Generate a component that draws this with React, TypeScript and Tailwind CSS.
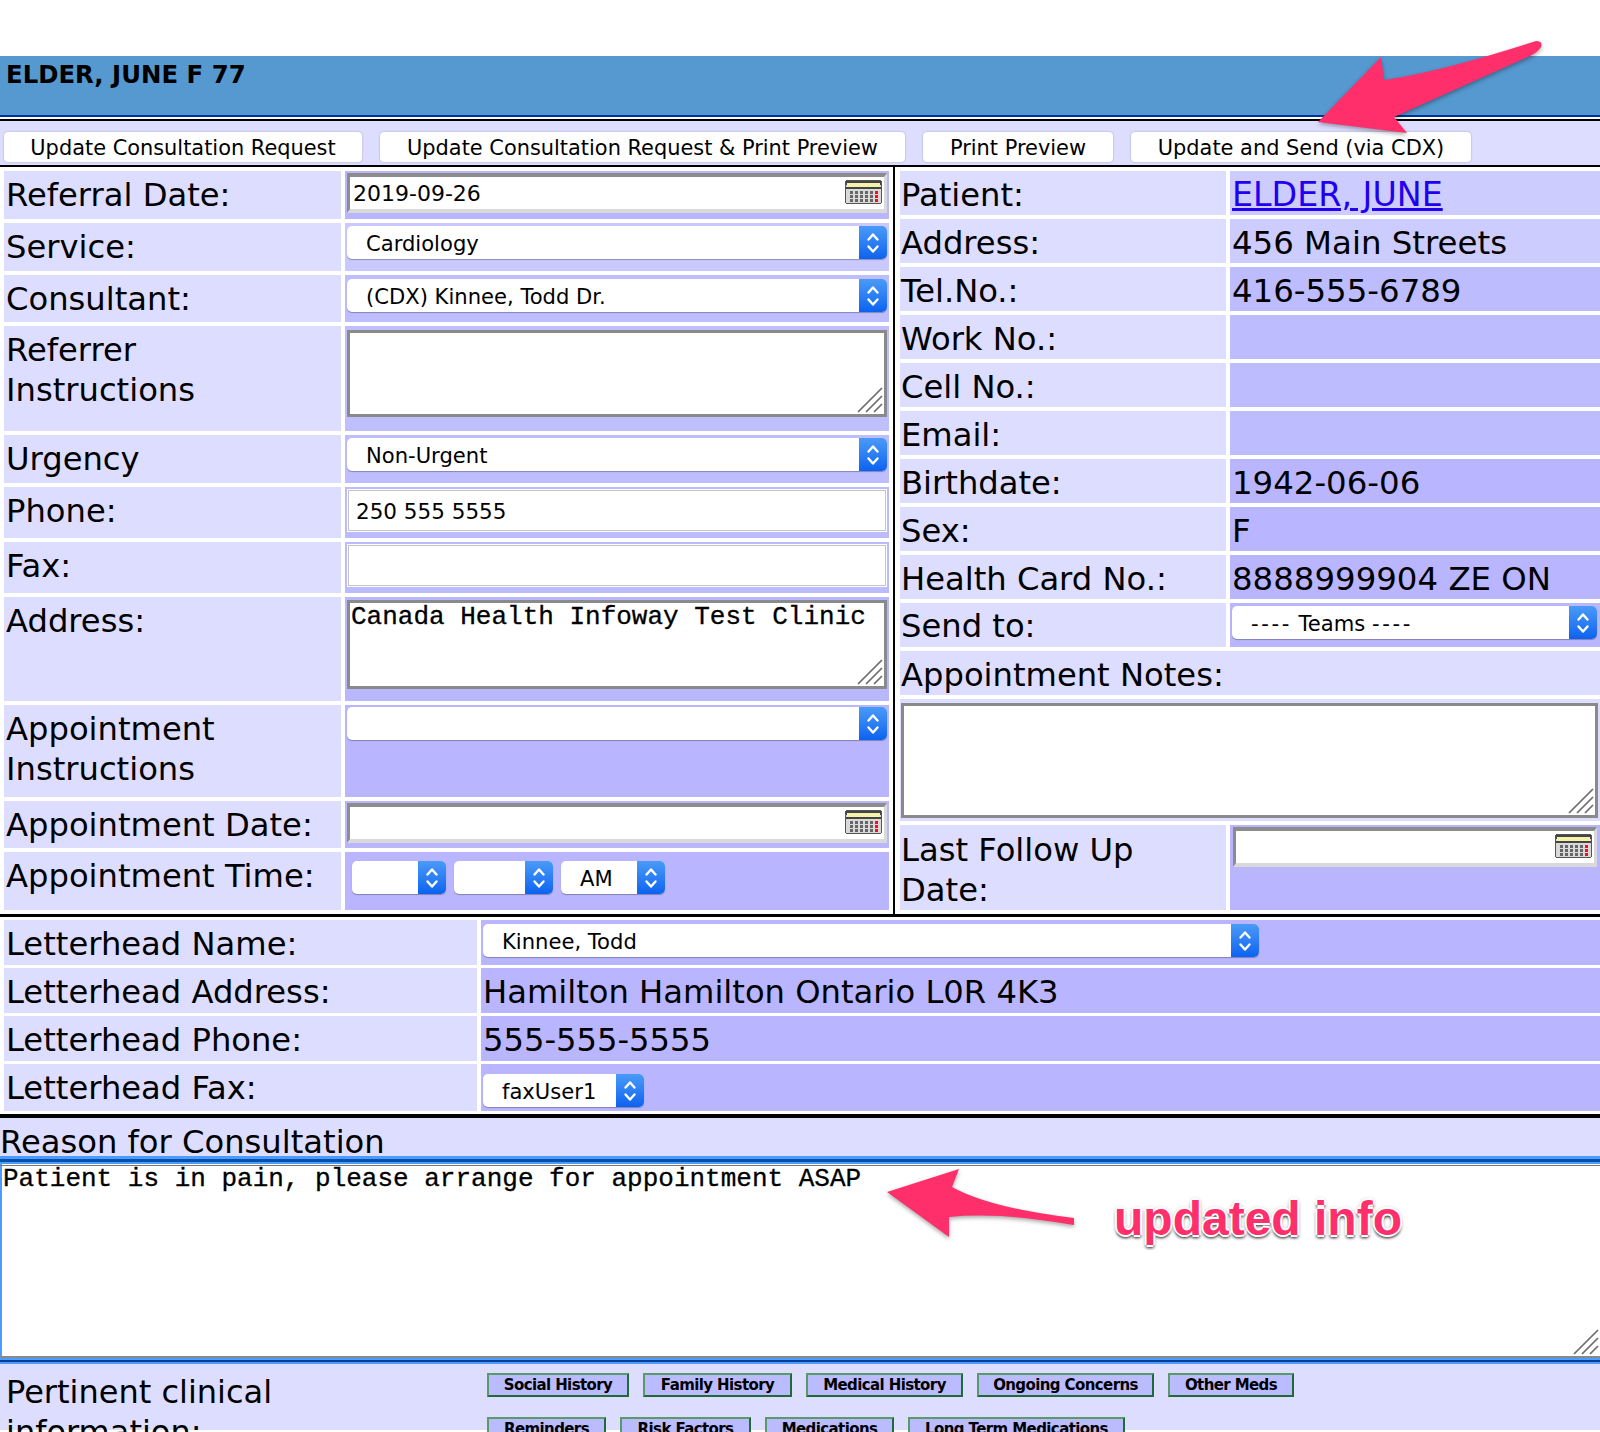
import React from "react";

const SANS = "font-['DejaVu_Sans',Verdana,sans-serif]";
const MONO = "font-['Liberation_Mono',monospace] text-[26px] leading-[26px] [-webkit-text-stroke:0.3px_black]";

function Chevrons({ className = "" }: { className?: string }) {
  return (
    <svg viewBox="0 0 16 26" className={className} fill="none" stroke="white" strokeWidth="2.4" strokeLinecap="round" strokeLinejoin="round">
      <path d="M3.5 9.5 8 4.5l4.5 5" />
      <path d="M3.5 16.5 8 21.5l4.5-5" />
    </svg>
  );
}

function Select({ text = "", w = "w-[540px]", blue = "w-[28px]", pad = "pl-[19px]" }: { text?: React.ReactNode; w?: string; blue?: string; pad?: string }) {
  return (
    <div className={`${w} h-[33px] flex rounded-[5px] bg-white shadow-[0_1px_1px_rgba(0,0,0,0.3)] overflow-hidden`}>
      <div className={`flex-1 min-w-0 ${pad} pt-[2px] flex items-center text-[21.1px] leading-none text-black whitespace-nowrap`}>{text}</div>
      <div className={`${blue} shrink-0 flex items-center justify-center bg-gradient-to-b from-[#4a9af7] to-[#0a62f0]`}>
        <Chevrons className="w-[16px] h-[26px]" />
      </div>
    </div>
  );
}

function Calendar() {
  return (
    <svg viewBox="0 0 37 24" className="w-[37px] h-[24px] -translate-y-[1px]" shapeRendering="crispEdges">
      <rect x="0.5" y="0.5" width="36" height="23" rx="2" fill="#d9d9d9" stroke="#555" />
      <rect x="1" y="1" width="35" height="4" fill="#444" />
      <rect x="2" y="3" width="33" height="4" fill="#f6f3a8" />
      <rect x="1" y="7" width="35" height="2" fill="#444" />
      {[11, 15, 19].map((y) =>
        [5, 10, 15, 20, 25, 30].map((x) => (
          <rect key={`${x}-${y}`} x={x} y={y} width="3" height="3" fill={x === 30 ? "#ee1122" : "#666"} />
        ))
      )}
    </svg>
  );
}

function DateInput({ text = "", w = "w-[540px]" }: { text?: string; w?: string }) {
  return (
    <div className={`${w} h-[40px] flex items-center justify-between pl-[3px] pr-[2px] bg-white border-y-[4px] border-x-[3px] border-t-[#8c8c8c] border-l-[#8c8c8c] border-r-[#d9d9d9] border-b-[#d9d9d9] text-[22px] text-black`}>
      <span>{text}</span>
      <Calendar />
    </div>
  );
}

function Resizer() {
  return (
    <svg viewBox="0 0 26 26" className="absolute right-[1px] bottom-[1px] w-[26px] h-[26px]" fill="none" stroke="#6a6a6a" strokeWidth="1.7">
      <path d="M1 25 25 1M9 25 25 9M17 25 25 17" />
    </svg>
  );
}

function TextBox({ text = "", h = "h-[87px]" }: { text?: string; h?: string }) {
  return (
    <div className={`relative w-[540px] ${h} bg-white border-[3px] border-[#8a8a8a] pl-[1px] pt-[1px] text-black ${MONO}`}>
      {text}
      <Resizer />
    </div>
  );
}

function PlainInput({ text = "" }: { text?: string }) {
  return (
    <div className="w-[538px] ml-[1px] h-[41px] bg-white border border-[#c4c4c4] shadow-[0_0_0_1px_#fff] pl-[7px] pt-[4px] flex items-center text-[21.5px] text-black">
      {text}
    </div>
  );
}

function Row({ h, label, children, bg = "bg-[#b9b6ff]", labelPt = "pt-[4px]" }: { h: string; label: React.ReactNode; children?: React.ReactNode; bg?: string; labelPt?: string }) {
  return (
    <div className={`flex gap-[4px] ${h}`}>
      <div className={`w-[337px] shrink-0 bg-[#ddddff] pl-[2px] ${labelPt} text-[32.2px] leading-[40px] text-black whitespace-nowrap`}>{label}</div>
      <div className={`flex-1 ${bg} pl-[2px]`}>{children}</div>
    </div>
  );
}

function RRow({ label, children, bg = "bg-[#b9b6ff]" }: { label: string; children?: React.ReactNode; bg?: string }) {
  return (
    <div className="flex gap-[4px] h-[44px]">
      <div className="w-[326px] shrink-0 bg-[#ddddff] pl-[1px] text-[32.2px] leading-[48px] text-black whitespace-nowrap">{label}</div>
      <div className={`flex-1 ${bg} pl-[2px] text-[32.4px] leading-[48px] text-black whitespace-nowrap`}>{children}</div>
    </div>
  );
}

function LRow({ label, children, h = "h-[45px]" }: { label: string; children?: React.ReactNode; h?: string }) {
  return (
    <div className={`flex gap-[4px] ${h}`}>
      <div className="w-[473px] shrink-0 bg-[#ddddff] pl-[2px] text-[32.2px] leading-[48px] text-black whitespace-nowrap">{label}</div>
      <div className="flex-1 bg-[#b9b6ff] pl-[2px] text-[32.2px] leading-[48px] text-black whitespace-nowrap">{children}</div>
    </div>
  );
}

function HistoryBtn({ text, w }: { text: string; w: string }) {
  return (
    <div className={`${w} h-[24px] shrink-0 bg-[#bbbbff] border-2 border-t-[#5a9a68] border-l-[#5a9a68] border-r-[#206a38] border-b-[#206a38] flex items-center justify-center text-[15px] font-bold text-black whitespace-nowrap tracking-[-0.6px]`}>
      {text}
    </div>
  );
}

function TopBtn({ text, w }: { text: string; w: string }) {
  return (
    <div className={`${w} h-[30px] shrink-0 bg-white rounded-[4px] shadow-[0_0_2px_rgba(0,0,0,0.3)] pt-[3px] flex items-center justify-center text-[20.9px] text-black whitespace-nowrap`}>
      {text}
    </div>
  );
}

export default function App() {
  return (
    <div className={`relative w-[1600px] h-[1432px] overflow-hidden bg-white ${SANS}`}>
      <div className="h-[56px]" />
      <div className="h-[59px] bg-[#5599d0] pl-[6px] pt-[4px] text-[24.4px] leading-[30px] font-bold text-black">ELDER, JUNE F 77</div>
      <div className="h-[2px] bg-[#003399]" />
      <div className="h-[2px]" />
      <div className="h-[2px] bg-black" />
      <div className="h-[44px] bg-[#ddddff] flex gap-[18px] pl-[4px] pt-[11px]">
        <TopBtn text="Update Consultation Request" w="w-[358px]" />
        <TopBtn text="Update Consultation Request & Print Preview" w="w-[525px]" />
        <TopBtn text="Print Preview" w="w-[190px]" />
        <TopBtn text="Update and Send (via CDX)" w="w-[340px]" />
      </div>
      <div className="h-[2px] bg-black" />

      <div className="flex h-[747px]">
        <div className="w-[893px] shrink-0 pl-[4px] pr-[4px] pt-[4px] flex flex-col gap-[4px]">
          <Row h="h-[48px]" label="Referral Date:"><div className="pt-[2px]"><DateInput text="2019-09-26" /></div></Row>
          <Row h="h-[48px]" label="Service:" bg="bg-[#c9c8ff]"><div className="pt-[3px]"><Select text="Cardiology" /></div></Row>
          <Row h="h-[47px]" label="Consultant:" bg="bg-[#bebdff]"><div className="pt-[4px]"><Select text="(CDX) Kinnee, Todd Dr." /></div></Row>
          <Row h="h-[105px]" label={<>Referrer<br />Instructions</>} bg="bg-[#bfbeff]"><div className="pt-[4px]"><TextBox /></div></Row>
          <Row h="h-[48px]" label="Urgency" bg="bg-[#bebdff]"><div className="pt-[3px]"><Select text="Non-Urgent" /></div></Row>
          <Row h="h-[51px]" label="Phone:" bg="bg-[#bcbbff]"><div className="pt-[3px]"><PlainInput text="250 555 5555" /></div></Row>
          <Row h="h-[51px]" label="Fax:" bg="bg-[#bcbbff]"><div className="pt-[3px]"><PlainInput /></div></Row>
          <Row h="h-[104px]" label="Address:" bg="bg-[#b9b8ff]"><div className="pt-[3px]"><TextBox text="Canada Health Infoway Test Clinic" h="h-[89px]" /></div></Row>
          <Row h="h-[92px]" label={<>Appointment<br />Instructions</>}><div className="pt-[2px]"><Select /></div></Row>
          <Row h="h-[47px]" label="Appointment Date:"><div className="pt-[2px]"><DateInput /></div></Row>
          <Row h="h-[58px]" label="Appointment Time:">
            <div className="flex pl-[5px] pt-[9px] gap-[8px]">
              <Select w="w-[94px]" />
              <Select w="w-[99px]" />
              <Select text="AM" w="w-[104px]" />
            </div>
          </Row>
        </div>
        <div className="w-[2px] shrink-0 bg-black" />
        <div className="flex-1 pl-[5px] pt-[4px] flex flex-col gap-[4px]">
          <RRow label="Patient:" bg="bg-[#ccccff]"><span className="text-[33.3px] text-[#2200ee] underline">ELDER, JUNE</span></RRow>
          <RRow label="Address:" bg="bg-[#ccccff]">456 Main Streets</RRow>
          <RRow label="Tel.No.:" bg="bg-[#bdbcff]">416-555-6789</RRow>
          <RRow label="Work No.:" bg="bg-[#bdbcff]" />
          <RRow label="Cell No.:" bg="bg-[#bdbcff]" />
          <RRow label="Email:" bg="bg-[#bdbcff]" />
          <RRow label="Birthdate:">1942-06-06</RRow>
          <RRow label="Sex:">F</RRow>
          <RRow label="Health Card No.:">8888999904 ZE ON</RRow>
          <div className="flex gap-[4px] h-[44px]">
            <div className="w-[326px] shrink-0 bg-[#ddddff] pl-[1px] text-[32.2px] leading-[46px] text-black">Send to:</div>
            <div className="flex-1 bg-[#b9b6ff] pl-[2px] pt-[3px]">
              <Select w="w-[365px]" text={<><span className="tracking-[2.6px]">----</span>&nbsp;Teams&nbsp;<span className="tracking-[2.6px]">----</span></>} />
            </div>
          </div>
          <div className="h-[44px] bg-[#ddddff] pl-[1px] text-[32.2px] leading-[48px] text-black">Appointment Notes:</div>
          <div className="h-[122px] bg-[#ddddff] pt-[4px] pl-[1px] pr-[2px]">
            <div className="relative h-[115px] bg-white border-[3px] border-[#8a8a8a]"><Resizer /></div>
          </div>
          <div className="flex gap-[4px] h-[85px]">
            <div className="w-[326px] shrink-0 bg-[#ddddff] pl-[1px] pt-[5px] text-[32.2px] leading-[40px] text-black">Last Follow Up<br />Date:</div>
            <div className="flex-1 bg-[#b9b6ff] pl-[3px] pt-[2px]"><DateInput w="w-[364px]" /></div>
          </div>
        </div>
      </div>

      <div className="h-[3px] bg-black" />
      <div className="pl-[4px] pt-[3px] flex flex-col gap-[3px] h-[197px] pb-[4px]">
        <LRow label="Letterhead Name:"><div className="pt-[4px]"><Select text="Kinnee, Todd" w="w-[776px]" /></div></LRow>
        <LRow label="Letterhead Address:">Hamilton Hamilton Ontario L0R 4K3</LRow>
        <LRow label="Letterhead Phone:">555-555-5555</LRow>
        <LRow label="Letterhead Fax:" h="h-[47px]"><div className="pt-[10px]"><Select text="faxUser1" w="w-[161px]" /></div></LRow>
      </div>
      <div className="h-[4px] bg-black" />

      <div className="h-[38px] bg-[#ddddff] text-[32.2px] leading-[48px] text-black whitespace-nowrap">Reason for Consultation</div>
      <div className="h-[3px] bg-[#4a9cff]" />
      <div className="h-[3px] bg-[#0a4fa8]" />
      <div className="h-[2px] bg-[#4a9cff]" />
      <div className={`relative h-[192px] bg-white border-l-2 border-[#4a9cff] pl-[1px] pt-[1px] text-black ${MONO}`}>
        <div className="h-[1px] -ml-[3px] bg-[#777]" />
        Patient is in pain, please arrange for appointment ASAP
        <Resizer />
      </div>
      <div className="h-[2px] bg-[#8a8a8a]" />
      <div className="h-[2px] bg-[#4a9cff]" />
      <div className="h-[2px] bg-[#0a3f98]" />
      <div className="h-[2px] bg-[#4a9cff]" />

      <div className="h-[66px] bg-[#ddddff] flex">
        <div className="w-[487px] shrink-0 pl-[6px] pt-[8px] text-[32px] leading-[40px] text-black">Pertinent clinical<br />information:</div>
        <div className="flex flex-col gap-[20px] pt-[9px]">
          <div className="flex gap-[14px]">
            <HistoryBtn text="Social History" w="w-[142px]" />
            <HistoryBtn text="Family History" w="w-[149px]" />
            <HistoryBtn text="Medical History" w="w-[157px]" />
            <HistoryBtn text="Ongoing Concerns" w="w-[177px]" />
            <HistoryBtn text="Other Meds" w="w-[126px]" />
          </div>
          <div className="flex gap-[14px]">
            <HistoryBtn text="Reminders" w="w-[119px]" />
            <HistoryBtn text="Risk Factors" w="w-[131px]" />
            <HistoryBtn text="Medications" w="w-[129px]" />
            <HistoryBtn text="Long Term Medications" w="w-[217px]" />
          </div>
        </div>
      </div>

      <svg viewBox="0 0 1600 1432" className="absolute inset-0 w-[1600px] h-[1432px] pointer-events-none drop-shadow-[0_2px_2px_rgba(0,0,0,0.35)]">
        <path fill="#ff2f6b" d="M1536 41 Q1543 41 1541 47 Q1538 52 1530 56 L1394 117 L1407 133 L1318 122 L1381 57 L1384 80 Q1440 72 1536 41Z" />
        <path fill="#ff2f6b" d="M887 1192 L959 1169 L952 1187 Q990 1208 1074 1218 L1074 1225 Q1000 1212 949 1217 L949 1237Z" />
      </svg>
      <div className="absolute left-[1114px] top-[1190px] font-['Liberation_Sans',Arial,sans-serif] font-bold text-[48px] leading-[58px] text-[#ff2f6b] whitespace-nowrap [text-shadow:2px_0_0_#fff,-2px_0_0_#fff,0_2px_0_#fff,0_-2px_0_#fff,1px_3px_3px_rgba(0,0,0,0.5),-1px_3px_3px_rgba(0,0,0,0.5),0_0_4px_rgba(0,0,0,0.4)]">updated info</div>
    </div>
  );
}
